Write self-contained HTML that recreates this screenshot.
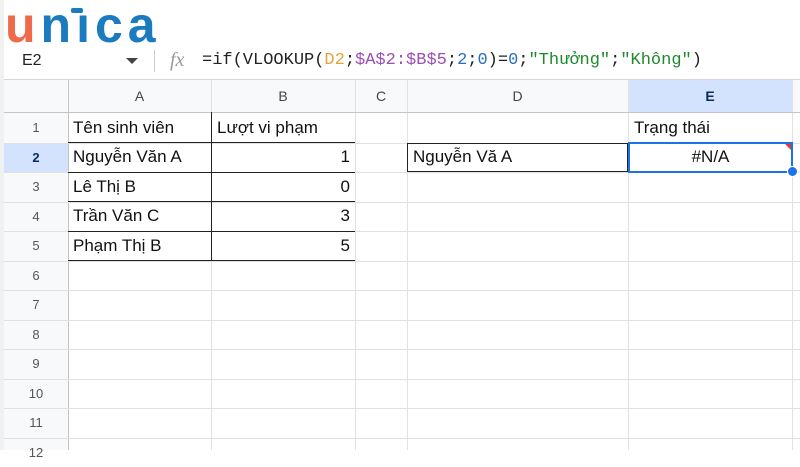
<!DOCTYPE html><html><head><meta charset="utf-8"><style>
body{margin:0;width:800px;height:450px;overflow:hidden;background:#fff;font-family:"Liberation Sans",Arial,sans-serif;position:relative}
.a{position:absolute}
.vl{position:absolute;width:1px;background:#e1e1e1}
.hl{position:absolute;height:1px;background:#e1e1e1}
.t{position:absolute;font-size:17px;color:#111;line-height:30px}
.rn{position:absolute;left:4px;width:64px;text-align:center;font-size:13px;color:#555}
.ch{position:absolute;top:80px;height:32px;line-height:32px;text-align:center;font-size:14px;color:#444}
.mono{font-family:"Liberation Mono",monospace}
</style></head><body>
<div class="a" style="left:0;top:0;width:4px;height:450px;background:#f1f1f1"></div>
<!-- logo -->
<div class="a" style="left:5px;top:0px;font-size:50px;font-weight:bold;letter-spacing:5px;line-height:50px;color:#1a7bbf"><span style="color:#f0694a">u</span>n<span style="position:relative">ı</span>ca</div>
<div class="a" style="left:71px;top:8px;width:12px;height:5px;background:#1a7bbf;border-radius:2px"></div>
<!-- formula bar -->
<div class="a" style="left:4px;top:45px;width:796px;height:34px;background:#fff;border-bottom:1px solid #d6d6d6"></div>
<div class="a" style="left:22px;top:49px;font-size:16px;color:#222;line-height:24px">E2</div>
<div class="a" style="left:126px;top:58px;width:0;height:0;border-left:6px solid transparent;border-right:6px solid transparent;border-top:6px solid #444"></div>
<div class="a" style="left:154px;top:50px;width:1px;height:22px;background:#ccc"></div>
<div class="a" style="left:170px;top:47px;font-size:20px;font-style:italic;color:#999;font-family:'Liberation Serif',serif;line-height:26px">fx</div>
<div class="a mono" style="left:202px;top:49px;font-size:17px;line-height:24px;color:#222;white-space:nowrap">=if(VLOOKUP(<span style="color:#e8a33c">D2</span>;<span style="color:#9b4fb5">$A$2:$B$5</span>;<span style="color:#2b6cc4">2</span>;<span style="color:#2b6cc4">0</span>)=<span style="color:#2b6cc4">0</span>;<span style="color:#1e8a2e">"Thưởng"</span>;<span style="color:#1e8a2e">"Không"</span>)</div>
<!-- header row -->
<div class="a" style="left:4px;top:80px;width:796px;height:32px;background:#f8f9fa"></div>
<div class="a" style="left:4px;top:80px;width:64px;height:32px;background:#f8f9fa;border-right:4px solid #c4c4c4;border-bottom:4px solid #c4c4c4;box-sizing:border-box"></div>
<div class="a" style="left:628px;top:80px;width:164px;height:32px;background:#d3e3fd"></div>
<div class="a" style="left:4px;top:80px;width:64px;height:370px;background:#f8f9fa"></div>
<div class="a" style="left:4px;top:143px;width:64px;height:29px;background:#d3e3fd"></div>
<div class="ch" style="left:68px;width:143px">A</div>
<div class="ch" style="left:211px;width:144px">B</div>
<div class="ch" style="left:355px;width:52px">C</div>
<div class="ch" style="left:407px;width:221px">D</div>
<div class="ch" style="left:628px;width:164px;font-weight:bold;color:#0b2a5c">E</div>
<!-- grid lines -->
<div class="vl" style="left:68px;top:80px;height:370px;background:#c4c4c4"></div>
<div class="vl" style="left:211px;top:80px;height:370px"></div>
<div class="vl" style="left:355px;top:80px;height:370px"></div>
<div class="vl" style="left:407px;top:80px;height:370px"></div>
<div class="vl" style="left:628px;top:80px;height:370px"></div>
<div class="vl" style="left:792px;top:80px;height:370px"></div>
<div class="hl" style="left:4px;top:112px;width:796px;background:#c4c4c4"></div>
<div class="hl" style="left:4px;top:143px;width:796px"></div>
<div class="hl" style="left:4px;top:172px;width:796px"></div>
<div class="hl" style="left:4px;top:202px;width:796px"></div>
<div class="hl" style="left:4px;top:231px;width:796px"></div>
<div class="hl" style="left:4px;top:261px;width:796px"></div>
<div class="hl" style="left:4px;top:290px;width:796px"></div>
<div class="hl" style="left:4px;top:320px;width:796px"></div>
<div class="hl" style="left:4px;top:349px;width:796px"></div>
<div class="hl" style="left:4px;top:379px;width:796px"></div>
<div class="hl" style="left:4px;top:408px;width:796px"></div>
<div class="hl" style="left:4px;top:438px;width:796px"></div>
<!-- row numbers -->
<div class="rn" style="top:112px;line-height:31px">1</div>
<div class="rn" style="top:143px;line-height:29px;font-weight:bold;color:#0b2a5c">2</div>
<div class="rn" style="top:172px;line-height:30px">3</div>
<div class="rn" style="top:202px;line-height:29px">4</div>
<div class="rn" style="top:231px;line-height:30px">5</div>
<div class="rn" style="top:261px;line-height:29px">6</div>
<div class="rn" style="top:290px;line-height:30px">7</div>
<div class="rn" style="top:320px;line-height:29px">8</div>
<div class="rn" style="top:349px;line-height:30px">9</div>
<div class="rn" style="top:379px;line-height:29px">10</div>
<div class="rn" style="top:408px;line-height:30px">11</div>
<div class="rn" style="top:438px;line-height:29px">12</div>
<!-- table borders -->
<div class="a" style="left:211px;top:112px;width:1px;height:149px;background:#222"></div>
<div class="a" style="left:68px;top:142px;width:287px;height:1px;background:#222"></div>
<div class="a" style="left:68px;top:172px;width:287px;height:1px;background:#222"></div>
<div class="a" style="left:68px;top:201px;width:287px;height:1px;background:#222"></div>
<div class="a" style="left:68px;top:231px;width:287px;height:1px;background:#222"></div>
<div class="a" style="left:68px;top:260px;width:287px;height:1px;background:#222"></div>
<!-- cells -->
<div class="t" style="left:73px;top:113px">Tên sinh viên</div>
<div class="t" style="left:217px;top:113px">Lượt vi phạm</div>
<div class="t" style="left:73px;top:142px">Nguyễn Văn A</div>
<div class="t" style="left:73px;top:172px">Lê Thị B</div>
<div class="t" style="left:73px;top:201px">Trần Văn C</div>
<div class="t" style="left:73px;top:231px">Phạm Thị B</div>
<div class="t" style="left:211px;width:139px;text-align:right;top:142px">1</div>
<div class="t" style="left:211px;width:139px;text-align:right;top:172px">0</div>
<div class="t" style="left:211px;width:139px;text-align:right;top:201px">3</div>
<div class="t" style="left:211px;width:139px;text-align:right;top:231px">5</div>
<div class="t" style="left:634px;top:113px">Trạng thái</div>
<div class="a" style="left:407px;top:143px;width:221px;height:29px;border:1px solid #222;box-sizing:border-box"></div>
<div class="t" style="left:413px;top:142px">Nguyễn Vă A</div>
<div class="a" style="left:628px;top:142px;width:165px;height:31px;border:2px solid #1a73e8;box-sizing:border-box"></div>
<div class="t" style="left:628px;width:165px;text-align:center;top:142px">#N/A</div>
<div class="a" style="left:785px;top:144px;width:0;height:0;border-left:6px solid transparent;border-top:6px solid #e53935"></div>
<div class="a" style="left:787px;top:166px;width:11px;height:11px;border-radius:50%;background:#1a73e8;border:1px solid #fff;box-sizing:border-box"></div>
</body></html>
